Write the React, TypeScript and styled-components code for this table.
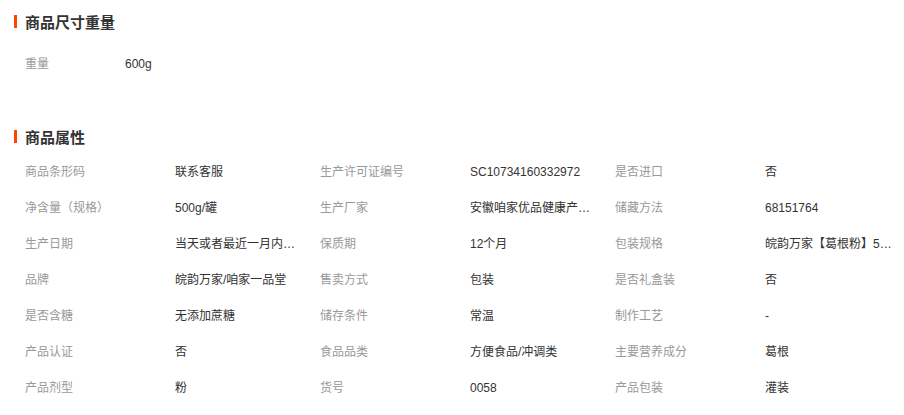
import React, { FC } from 'react';
import styled, { createGlobalStyle } from 'styled-components';

const GlobalStyle = createGlobalStyle`
  body {
    margin: 0;
    background: #fff;
    font-family: "Liberation Sans", "Noto Sans CJK SC", sans-serif;
    font-size: 12px;
    color: #333;
  }
`;

const Page = styled.div`
  width: 904px;
  height: 415px;
  overflow: hidden;
  padding-top: 11px;
  box-sizing: border-box;
`;

const Section = styled.section<{ gap: number }>`
  margin-bottom: ${props => props.gap}px;
`;

const Heading = styled.h3<{ space: number }>`
  display: flex;
  align-items: center;
  margin: 0 0 ${props => props.space}px 0;
  padding-left: 14px;
  height: 20px;
  font-size: 15px;
  font-weight: bold;
  color: #333;
  &::before {
    content: '';
    display: block;
    width: 3px;
    height: 13px;
    background: #ff4400;
    margin-right: 8px;
  }
`;

const Grid = styled.div`
  display: grid;
  grid-template-columns: repeat(3, 295px);
  padding-left: 25px;
`;

const Item = styled.div`
  display: flex;
  height: 36px;
  line-height: 36px;
`;

const Label = styled.span<{ w: number }>`
  width: ${props => props.w}px;
  flex-shrink: 0;
  color: #999;
`;

const Value = styled.span`
  max-width: 128px;
  color: #333;
  white-space: nowrap;
  overflow: hidden;
  text-overflow: ellipsis;
`;

type Attr = { label: string; value: string };

const attrs: Attr[] = [
  { label: '商品条形码', value: '联系客服' },
  { label: '生产许可证编号', value: 'SC10734160332972' },
  { label: '是否进口', value: '否' },
  { label: '净含量（规格）', value: '500g/罐' },
  { label: '生产厂家', value: '安徽咱家优品健康产业有限公司' },
  { label: '储藏方法', value: '68151764' },
  { label: '生产日期', value: '当天或者最近一月内生产' },
  { label: '保质期', value: '12个月' },
  { label: '包装规格', value: '皖韵万家【葛根粉】500g/罐' },
  { label: '品牌', value: '皖韵万家/咱家一品堂' },
  { label: '售卖方式', value: '包装' },
  { label: '是否礼盒装', value: '否' },
  { label: '是否含糖', value: '无添加蔗糖' },
  { label: '储存条件', value: '常温' },
  { label: '制作工艺', value: '-' },
  { label: '产品认证', value: '否' },
  { label: '食品品类', value: '方便食品/冲调类' },
  { label: '主要营养成分', value: '葛根' },
  { label: '产品剂型', value: '粉' },
  { label: '货号', value: '0058' },
  { label: '产品包装', value: '灌装' },
];

const AttrItem: FC<Attr & { labelWidth?: number }> = ({ label, value, labelWidth = 150 }) => (
  <Item>
    <Label w={labelWidth}>{label}</Label>
    <Value>{value}</Value>
  </Item>
);

const App: FC = () => (
  <>
    <GlobalStyle />
    <Page>
      <Section gap={44}>
        <Heading space={15}>商品尺寸重量</Heading>
        <Grid>
          <AttrItem label="重量" value="600g" labelWidth={100} />
        </Grid>
      </Section>
      <Section gap={0}>
        <Heading space={8}>商品属性</Heading>
        <Grid>
          {attrs.map(a => (
            <AttrItem key={a.label} label={a.label} value={a.value} />
          ))}
        </Grid>
      </Section>
    </Page>
  </>
);

export default App;
